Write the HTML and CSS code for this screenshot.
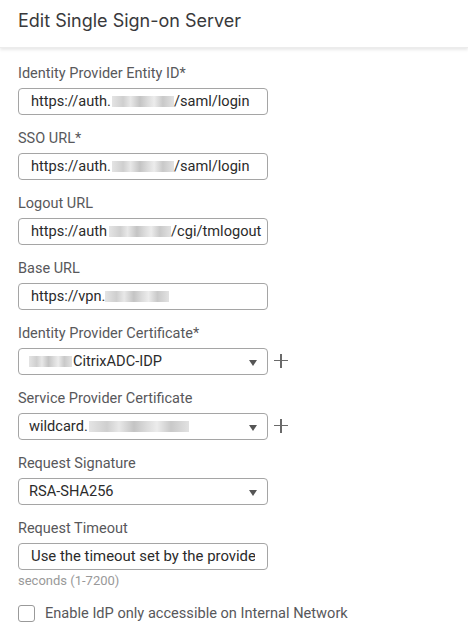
FILE: index.html
```html
<!DOCTYPE html>
<html lang="en">
<head>
  <meta charset="UTF-8" />
  <meta name="viewport" content="width=device-width, initial-scale=1" />
  <title>Edit Single Sign-on Server</title>
  <link rel="stylesheet" href="styles.css">
</head>
<body>

<!-- Header -->
<div class="header">
  <h1>Edit Single Sign-on Server</h1>
</div>

<!-- Form -->
<div class="form">
  <div class="field">
    <div class="label">Identity Provider Entity ID*</div>
    <div class="input"><span class="val">https://auth.<span class="blur b1"></span>/saml/login</span></div>
  </div>

  <div class="field">
    <div class="label">SSO URL*</div>
    <div class="input"><span class="val">https://auth.<span class="blur b1"></span>/saml/login</span></div>
  </div>

  <div class="field">
    <div class="label">Logout URL</div>
    <div class="input clip"><span class="val">https://auth<span class="blur b2"></span>/cgi/tmlogout</span></div>
  </div>

  <div class="field">
    <div class="label">Base URL</div>
    <div class="input"><span class="val">https://vpn.<span class="blur b3"></span></span></div>
  </div>

  <div class="field">
    <div class="label">Identity Provider Certificate*</div>
    <div class="row">
      <div class="input select"><span class="val"><span class="blur b4"></span>CitrixADC-IDP</span><span class="caret"></span></div>
      <span class="plus"></span>
    </div>
  </div>

  <div class="field">
    <div class="label">Service Provider Certificate</div>
    <div class="row">
      <div class="input select"><span class="val">wildcard.<span class="blur b5"></span></span><span class="caret"></span></div>
      <span class="plus"></span>
    </div>
  </div>

  <div class="field">
    <div class="label">Request Signature</div>
    <div class="input select"><span class="val">RSA-SHA256</span><span class="caret"></span></div>
  </div>

  <div class="field last">
    <div class="label">Request Timeout</div>
    <div class="input wide"><span class="val">Use the timeout set by the provider</span></div>
    <div class="hint">seconds (1-7200)</div>
  </div>

  <label class="check">
    <span class="box"></span>
    <span>Enable IdP only accessible on Internal Network</span>
  </label>
</div>

</body>
</html>
```

FILE: styles.css
```css
* { margin: 0; padding: 0; box-sizing: border-box; }
body {
  font-family: Roboto, "Liberation Sans", sans-serif;
  background: #fff;
  color: #333;
}

/* Header */
.header {
  height: 48px;
  padding: 0 18px;
  display: flex;
  align-items: center;
  box-shadow: 0 2px 3px rgba(0,0,0,0.09);
  border-bottom: 1px solid #ececec;
}

.header h1 {
  font-family: Inter, Roboto, sans-serif;
  font-size: 18px;
  font-weight: normal;
  color: #39393b;
  margin-top: -6px;
}

/* Form */
.form {
  padding: 16px 18px 0;
}

.field {
  margin-bottom: 14px;
}

.field.last {
  margin-bottom: 16px;
}

.label {
  font-size: 14.5px;
  line-height: 19px;
  color: #58585b;
  margin-bottom: 5px;
}

.input {
  width: 250px;
  height: 27px;
  border: 1px solid #a5a5a5;
  border-radius: 4px;
  padding: 0 10px 0 12px;
  font-size: 14.6px;
  line-height: 25px;
  color: #2b2b2b;
  display: flex;
  align-items: center;
}

.val {
  flex: 1;
  min-width: 0;
  overflow: hidden;
  white-space: nowrap;
  display: flex;
  align-items: center;
}

.input.clip {
  padding-right: 3px;
}

.input.wide {
  font-size: 14.9px;
  padding-right: 12px;
}

.select {
  position: relative;
  padding-left: 10px;
  padding-right: 28px;
}

.caret {
  position: absolute;
  right: 10px;
  top: 11px;
  border-left: 4px solid transparent;
  border-right: 4px solid transparent;
  border-top: 6px solid #555;
}

.row {
  display: flex;
  align-items: center;
  gap: 6px;
}

.plus {
  position: relative;
  width: 14px;
  height: 14px;
  margin-top: -2px;
}

.plus::before, .plus::after {
  content: "";
  position: absolute;
  background: #6a6a6a;
}

.plus::before { left: 0; right: 0; top: 6px; height: 1.5px; }
.plus::after { top: 0; bottom: 0; left: 6px; width: 1.5px; }

/* Blurred parts */
.blur {
  display: inline-block;
  height: 11px;
  flex-shrink: 0;
  background: linear-gradient(90deg, #e4e4e4 0%, #cfcfcf 18%, #e8e8e8 30%, #c4c4c4 45%, #dcdcdc 58%, #ececec 68%, #c9c9c9 82%, #e2e2e2 100%);
}

.b1 { width: 62px; margin-left: 1px; }
.b2 { width: 62px; margin-left: 2px; }
.b3 { width: 64px; }
.b4 { width: 43px; margin-right: 1px; }
.b5 { width: 100px; margin-left: 1px; }

.hint {
  margin-top: 3px;
  font-size: 13px;
  line-height: 15px;
  color: #999;
}

/* Checkbox */
.check {
  display: flex;
  align-items: center;
  gap: 10px;
  font-size: 14.6px;
  color: #58585b;
}

.check .box {
  width: 17px;
  height: 17px;
  border: 1px solid #9a9a9a;
  border-radius: 3px;
}
```
